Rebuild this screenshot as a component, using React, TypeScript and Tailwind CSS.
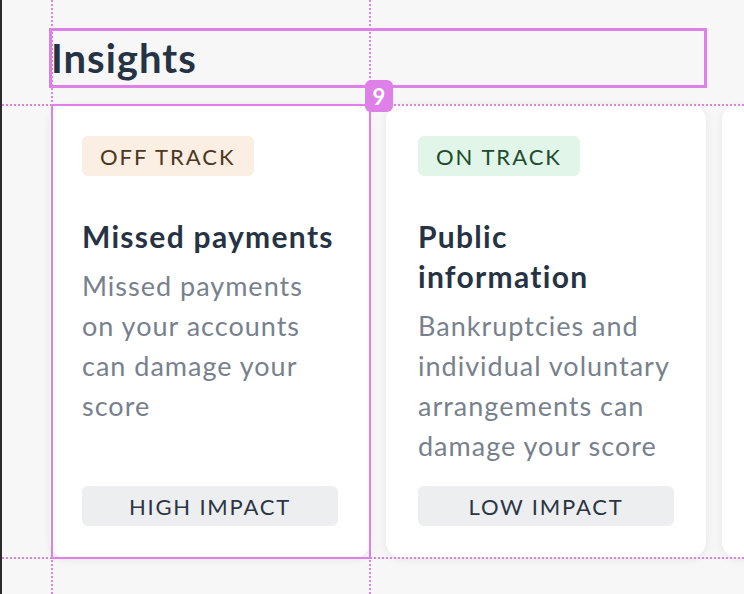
const pink = "#df80e8";

type Insight = {
  status: "off" | "on";
  title: string;
  body: string;
  impact: string;
};

const insights: Insight[] = [
  {
    status: "off",
    title: "Missed payments",
    body: "Missed payments on your accounts can damage your score",
    impact: "High impact",
  },
  {
    status: "on",
    title: "Public information",
    body: "Bankruptcies and individual voluntary arrangements can damage your score",
    impact: "Low impact",
  },
];

const StatusPill = ({ status }: { status: Insight["status"] }) =>
  status === "off" ? (
    <span className="self-start h-10 px-[18px] flex items-center rounded-md bg-[#fbeee3] text-[#4b3622] text-[22px] tracking-[2px] uppercase">
      Off track
    </span>
  ) : (
    <span className="self-start h-10 px-[18px] flex items-center rounded-md bg-[#e1f6e9] text-[#204b2e] text-[22px] tracking-[2px] uppercase">
      On track
    </span>
  );

const InsightCard = ({ item }: { item: Insight }) => {
  return (
    <div className="shrink-0 w-[320px] h-[454px] rounded-2xl bg-white p-8 flex flex-col shadow-[0_2px_10px_rgba(0,0,0,0.07)]">
      <StatusPill status={item.status} />
      <h3 className="mt-10 mb-2.5 text-[30px] leading-10 font-bold tracking-[1.3px] text-[#253345]">{item.title}</h3>
      <p className="text-[27px] leading-10 tracking-[1px] text-[#77818d]">{item.body}</p>
      <div className="mt-auto h-10 rounded-md bg-[#edeef0] flex items-center justify-center text-[22px] tracking-[1.8px] uppercase text-[#2b3543]">
        {item.impact}
      </div>
    </div>
  );
};

export default function App() {
  return (
    <div className="relative w-[744px] h-[594px] overflow-hidden bg-[#f7f7f7] border-l-2 border-[#2b2b2b] font-['Lato','Noto_Sans',sans-serif]">
      <div className="pl-[48px] pt-[28px]">
        <h2 className="w-[658px] h-[60px] pl-[1px] flex items-center text-[40px] font-bold text-[#253345] tracking-[1px]">
          Insights
        </h2>
        <div className="mt-[16px] flex gap-4">
          {insights.map((item) => (
            <InsightCard key={item.title} item={item} />
          ))}
          <div className="shrink-0 w-[320px] h-[454px] rounded-2xl bg-white shadow-[0_2px_10px_rgba(0,0,0,0.07)]" />
        </div>
      </div>

      {/* design tool overlay: spacing guides */}
      <div className="absolute top-0 bottom-0 left-[49px] w-[2px] bg-[repeating-linear-gradient(to_bottom,#df80e8_0_2px,transparent_2px_4px)]" />
      <div className="absolute top-0 bottom-0 left-[367px] w-[2px] bg-[repeating-linear-gradient(to_bottom,#df80e8_0_2px,transparent_2px_4px)]" />
      <div className="absolute left-0 right-0 top-[104px] h-[2px] bg-[repeating-linear-gradient(to_right,#df80e8_0_2px,transparent_2px_4px)]" />
      <div className="absolute left-0 right-0 top-[557px] h-[2px] bg-[repeating-linear-gradient(to_right,#df80e8_0_2px,transparent_2px_4px)]" />

      {/* selection outlines */}
      <div className="absolute left-[47px] top-[28px] w-[658px] h-[60px] border-[3px] border-[#df80e8]" />
      <div className="absolute left-[49px] top-[104px] w-[320px] h-[455px] border-2 border-[#df80e8]" />
      <div
        className="absolute left-[363px] top-[80px] w-[28px] h-[32px] rounded-md flex items-center justify-center text-white text-[22px] font-bold"
        style={{ backgroundColor: pink }}
      >
        9
      </div>
    </div>
  );
}
